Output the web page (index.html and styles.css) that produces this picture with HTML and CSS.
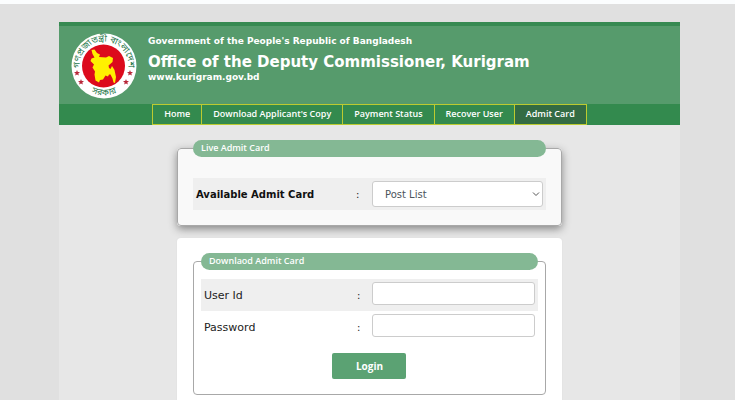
FILE: index.html
```html
<!DOCTYPE html>
<html lang="en">
<head>
<meta charset="utf-8">
<title>Office of the Deputy Commissioner, Kurigram</title>
<link rel="stylesheet" href="styles.css">
</head>
<body>
<div class="page">
  <header class="banner">
    <svg class="seal" viewBox="0 0 66 66" aria-hidden="true">
      <defs>
        <path id="arc-top" d="M10.500 42 A24.300 24.300 0 1 1 55.500 42"/>
        <path id="arc-bottom" d="M10 51 A29 29 0 0 0 56 51"/>
        <path id="star" d="M0 -3 L.8 -1 L3 -.9 L1.300 .5 L1.900 2.600 L0 1.400 L-1.900 2.600 L-1.300 .5 L-3 -.9 L-.8 -1Z"/>
      </defs>
      <circle cx="33" cy="33" r="32.500" fill="#fff"/>
      <circle cx="32.500" cy="33" r="21.500" fill="#dc0a1c"/>
      <path fill="#fff000" d="M20.500 17l3-.5 2.500 3.500 3 1.500-1 2.500 7 .5 3-1.500 4 2-.5 4-4 3.500.5 2.500 1.500 1 1.500-3 2.500 4 1.500 7-1 6-1.500-.5-1-4-2-4-1.500 0-1 2-2.500-1-2.500 4-3 .5-1 2.500-3.500-2-1-6 .5-3-2.500-4 1.500-3-3.500-3.500 1-2.500 3-1-2-3.500z"/>
      <g fill="#b8283a">
        <use href="#star" x="6" y="40"/><use href="#star" x="10" y="49"/>
        <use href="#star" x="59" y="40"/><use href="#star" x="55" y="49"/>
      </g>
      <text class="seal-text"><textPath href="#arc-top" startOffset="50%">গণপ্রজাতন্ত্রী বাংলাদেশ</textPath></text>
      <text class="seal-text"><textPath href="#arc-bottom" startOffset="50%">সরকার</textPath></text>
    </svg>
    <div class="titles">
      <p class="small-title">Government of the People's Republic of Bangladesh</p>
      <h1>Office of the Deputy Commissioner, Kurigram</h1>
      <p class="small-title site">www.kurigram.gov.bd</p>
    </div>
  </header>
  <nav class="menu">
    <a href="#">Home</a>
    <a href="#">Download Applicant's Copy</a>
    <a href="#">Payment Status</a>
    <a href="#">Recover User</a>
    <a href="#" class="current">Admit Card</a>
  </nav>
  <main>
    <fieldset class="live">
      <legend>Live Admit Card</legend>
      <div class="row shaded">
        <label for="post">Available Admit Card</label><span>:</span>
        <div class="select-wrap">
          <select id="post"><option>Post List</option></select>
          <svg class="chevron" viewBox="0 0 8 6" aria-hidden="true"><path d="M1 1.500l3 3 3-3"/></svg>
        </div>
      </div>
    </fieldset>
    <form class="card">
      <fieldset class="download">
        <legend>Downlaod Admit Card</legend>
        <div class="row shaded"><label for="user">User Id</label><span>:</span><input id="user" type="text"></div>
        <div class="row"><label for="pass">Password</label><span>:</span><input id="pass" type="password"></div>
        <button type="button">Login</button>
      </fieldset>
    </form>
  </main>
</div>
</body>
</html>
```
FILE: styles.css
```css
* { box-sizing: border-box; }
html { overflow: hidden; }
body {
  margin: 0;
  min-height: 100vh;
  border-top: 4px solid #fbfdfe;
  background: #e0e0e0;
  font-family: "DejaVu Sans", Verdana, sans-serif;
  font-size: 10px;
  color: #222;
}
.page {
  margin: 18px 55px 0 59px;
  min-height: calc(100vh - 22px);
  background: #e7e7e7;
}
.banner {
  display: flex;
  gap: 11px;
  height: 82px;
  padding: 7px 12px 0;
  border-top: 4px solid #378a52;
  background: #569b6c;
  color: #fff;
}
.seal { flex: none; width: 66px; height: 66px; }
.seal-text {
  font-family: "Noto Sans Bengali", "Noto Sans", sans-serif;
  font-size: 9px;
  text-anchor: middle;
  fill: #2c7a4e;
}
.small-title { margin: 0; font-size: 9px; font-weight: bold; line-height: 16px; }
h1 { margin: 4px 0 0; font-size: 15px; line-height: 18px; white-space: nowrap; }
.site { line-height: 12px; }
.menu {
  display: flex;
  justify-content: center;
  height: 21px;
  background: #338a4e;
}
.menu a {
  padding: 0 11px;
  border: 1px solid #bccb30;
  border-left-width: 0;
  color: #fff;
  font-family: "Open Sans", sans-serif;
  font-size: 9px;
  font-weight: 600;
  line-height: 18px;
  text-decoration: none;
}
.menu a:first-child { border-left-width: 1px; }
.menu .current { background: #336b43; }
main { display: flex; flex-direction: column; align-items: center; gap: 12px; padding-top: 15px; }
fieldset { margin: 0; border: 1px solid #a8a8a8; border-radius: 4px; }
legend {
  width: 100%;
  padding: 0 8px;
  border-radius: 9px;
  background: #84b894;
  color: #fff;
  font-family: "Open Sans", sans-serif;
  font-size: 9px;
  font-weight: 600;
  line-height: 16px;
  height: 17px;
}
.live {
  width: 62%;
  padding: 21px 15px 15px;
  background: #f9f9f9;
  box-shadow: 0 3px 8px #888;
}
.row {
  display: grid;
  grid-template-columns: 153px 15px 1fr;
  align-items: center;
  height: 32px;
  padding: 0 3px;
}
.shaded { background: #efefef; }
.live .row { grid-template-columns: 160px 16px 1fr; }
.live label { font-weight: bold; color: #111; }
.download label { font-size: 11px; }
.select-wrap { position: relative; }
select, input {
  display: block;
  width: 100%;
  border: 1px solid #ccc;
  border-radius: 3px;
  background: #fff;
  font: inherit;
}
select { appearance: none; height: 26px; padding: 0 12px; color: #4c555b; }
.chevron { position: absolute; right: 3px; top: 10px; width: 8px; height: 6px; fill: none; stroke: #555; }
.card { width: 62%; padding: 15px 16px; border-radius: 4px; background: #fff; box-shadow: 0 0 2px #ddd; }
.download { padding: 9px 7px 15px; }
input { height: 23px; margin-bottom: 3px; }
button {
  display: block;
  width: 74px;
  height: 26px;
  margin: 10px auto 0;
  border: 0;
  border-radius: 2px;
  background: #5ba273;
  color: #fff;
  font: bold 10px "Open Sans", sans-serif;
}
```
